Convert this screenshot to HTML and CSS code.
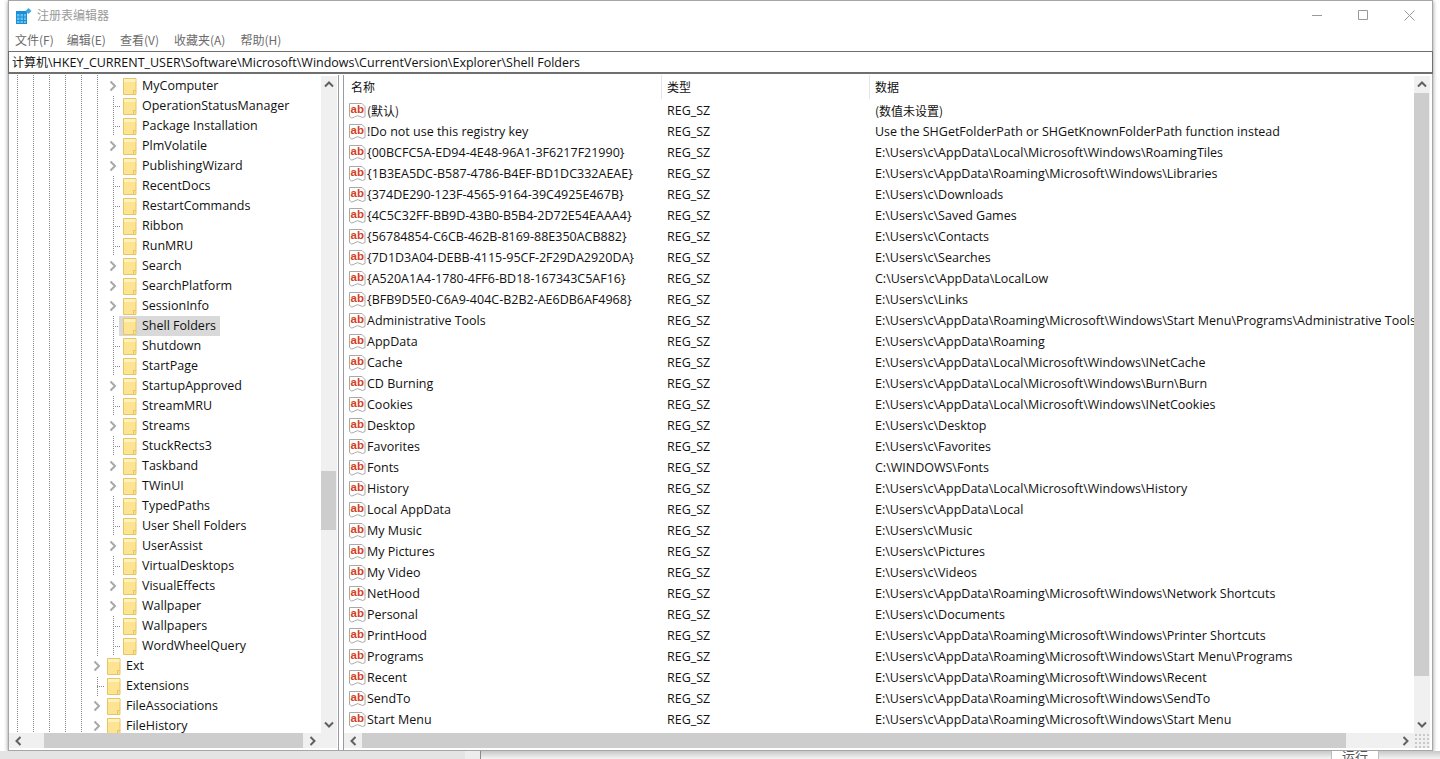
FILE: index.html
```html
<!DOCTYPE html>
<html lang="zh-CN">
<head>
<meta charset="utf-8">
<title>注册表编辑器</title>
<link rel="stylesheet" href="styles.css">
</head>
<body>
<svg class="defs" width="0" height="0" aria-hidden="true">
  <symbol id="folder" viewBox="0 0 14 17">
    <path d="M.5.5H13V16.5H.5Z" fill="#fce492" stroke="#e8c564"/>
    <path d="M1 1H12.5V4H1Z" fill="#fff1bb"/>
    <path d="M10.5 16.5V12.5H13" fill="#f9dc80" stroke="#e8c564"/>
  </symbol>
  <symbol id="ab" viewBox="0 0 17 16">
    <path d="M.5.5H13L16 3.500V13.500Q13.500 15.500 11 13.500T5.500 14T.5 13.500Z" fill="#fff" stroke="#a9a9a9"/>
    <text x="1.500" y="10" class="ab-text">ab</text>
  </symbol>
  <symbol id="chev" viewBox="0 0 8 12">
    <path d="M1.5 1.5 6 6 1.5 10.5" fill="none" stroke="#a8a8a8" stroke-width="2"/>
  </symbol>
  <symbol id="up" viewBox="0 0 10 7"><path d="M1 5.5 5 1.5 9 5.5" fill="none" stroke="#606060" stroke-width="2"/></symbol>
  <symbol id="down" viewBox="0 0 10 7"><path d="M1 1.5 5 5.5 9 1.5" fill="none" stroke="#606060" stroke-width="2"/></symbol>
  <symbol id="left" viewBox="0 0 7 10"><path d="M5.5 1 1.5 5 5.5 9" fill="none" stroke="#606060" stroke-width="2"/></symbol>
  <symbol id="right" viewBox="0 0 7 10"><path d="M1.5 1 5.5 5 1.5 9" fill="none" stroke="#606060" stroke-width="2"/></symbol>
</svg>
<div class="window">
  <header class="titlebar">
    <svg class="appicon" width="16" height="16" viewBox="0 0 16 16">
      <path d="M0 3H11V16H0Z" fill="#1a8fd6"/>
      <path d="M1 6H3.5V8.5H1ZM4.5 6H7V8.5H4.5ZM8 6H10V8.5H8ZM1 9.5H3.5V12H1ZM4.5 9.5H7V12H4.5ZM8 9.5H10V12H8ZM1 13H3.5V15H1ZM4.5 13H7V15H4.500ZM8 13H10V15H8Z" fill="#63c1f2"/>
      <path d="M12.500 0 15.500 3 12.500 6 9.500 3Z" fill="#3fa9e8"/>
    </svg>
    <span class="title">注册表编辑器</span>
    <div class="controls">
      <span class="ctl"><svg width="10" height="10" viewBox="0 0 10 10"><path d="M0 5.5H10" stroke="#999"/></svg></span>
      <span class="ctl"><svg width="10" height="10" viewBox="0 0 10 10"><path d="M.5.5H9.5V9.5H.5Z" fill="none" stroke="#999"/></svg></span>
      <span class="ctl"><svg width="11" height="11" viewBox="0 0 11 11"><path d="M.5.5 10.5 10.5M10.5.5.5 10.5" stroke="#999"/></svg></span>
    </div>
  </header>
  <nav class="menubar">
    <span>文件(F)</span><span>编辑(E)</span><span>查看(V)</span><span>收藏夹(A)</span><span>帮助(H)</span>
  </nav>
  <div class="address"><span class="c">计算机</span>\HKEY_CURRENT_USER\Software\Microsoft\Windows\CurrentVersion\Explorer\Shell Folders</div>
  <main class="panes">
    <section class="treepane">
      <div class="panebody">
        <div class="tree">
          <div class="row d2"><span class="exp"><svg width="8" height="12"><use href="#chev"/></svg></span><span class="node"><svg width="14" height="17"><use href="#folder"/></svg>MyComputer</span></div>
          <div class="row d2 leaf"><span class="exp"></span><span class="node"><svg width="14" height="17"><use href="#folder"/></svg>OperationStatusManager</span></div>
          <div class="row d2 leaf"><span class="exp"></span><span class="node"><svg width="14" height="17"><use href="#folder"/></svg>Package Installation</span></div>
          <div class="row d2"><span class="exp"><svg width="8" height="12"><use href="#chev"/></svg></span><span class="node"><svg width="14" height="17"><use href="#folder"/></svg>PlmVolatile</span></div>
          <div class="row d2"><span class="exp"><svg width="8" height="12"><use href="#chev"/></svg></span><span class="node"><svg width="14" height="17"><use href="#folder"/></svg>PublishingWizard</span></div>
          <div class="row d2 leaf"><span class="exp"></span><span class="node"><svg width="14" height="17"><use href="#folder"/></svg>RecentDocs</span></div>
          <div class="row d2 leaf"><span class="exp"></span><span class="node"><svg width="14" height="17"><use href="#folder"/></svg>RestartCommands</span></div>
          <div class="row d2 leaf"><span class="exp"></span><span class="node"><svg width="14" height="17"><use href="#folder"/></svg>Ribbon</span></div>
          <div class="row d2 leaf"><span class="exp"></span><span class="node"><svg width="14" height="17"><use href="#folder"/></svg>RunMRU</span></div>
          <div class="row d2"><span class="exp"><svg width="8" height="12"><use href="#chev"/></svg></span><span class="node"><svg width="14" height="17"><use href="#folder"/></svg>Search</span></div>
          <div class="row d2"><span class="exp"><svg width="8" height="12"><use href="#chev"/></svg></span><span class="node"><svg width="14" height="17"><use href="#folder"/></svg>SearchPlatform</span></div>
          <div class="row d2"><span class="exp"><svg width="8" height="12"><use href="#chev"/></svg></span><span class="node"><svg width="14" height="17"><use href="#folder"/></svg>SessionInfo</span></div>
          <div class="row d2 leaf"><span class="exp"></span><span class="node selected"><svg width="14" height="17"><use href="#folder"/></svg>Shell Folders</span></div>
          <div class="row d2 leaf"><span class="exp"></span><span class="node"><svg width="14" height="17"><use href="#folder"/></svg>Shutdown</span></div>
          <div class="row d2 leaf"><span class="exp"></span><span class="node"><svg width="14" height="17"><use href="#folder"/></svg>StartPage</span></div>
          <div class="row d2"><span class="exp"><svg width="8" height="12"><use href="#chev"/></svg></span><span class="node"><svg width="14" height="17"><use href="#folder"/></svg>StartupApproved</span></div>
          <div class="row d2 leaf"><span class="exp"></span><span class="node"><svg width="14" height="17"><use href="#folder"/></svg>StreamMRU</span></div>
          <div class="row d2"><span class="exp"><svg width="8" height="12"><use href="#chev"/></svg></span><span class="node"><svg width="14" height="17"><use href="#folder"/></svg>Streams</span></div>
          <div class="row d2 leaf"><span class="exp"></span><span class="node"><svg width="14" height="17"><use href="#folder"/></svg>StuckRects3</span></div>
          <div class="row d2"><span class="exp"><svg width="8" height="12"><use href="#chev"/></svg></span><span class="node"><svg width="14" height="17"><use href="#folder"/></svg>Taskband</span></div>
          <div class="row d2"><span class="exp"><svg width="8" height="12"><use href="#chev"/></svg></span><span class="node"><svg width="14" height="17"><use href="#folder"/></svg>TWinUI</span></div>
          <div class="row d2 leaf"><span class="exp"></span><span class="node"><svg width="14" height="17"><use href="#folder"/></svg>TypedPaths</span></div>
          <div class="row d2 leaf"><span class="exp"></span><span class="node"><svg width="14" height="17"><use href="#folder"/></svg>User Shell Folders</span></div>
          <div class="row d2"><span class="exp"><svg width="8" height="12"><use href="#chev"/></svg></span><span class="node"><svg width="14" height="17"><use href="#folder"/></svg>UserAssist</span></div>
          <div class="row d2 leaf"><span class="exp"></span><span class="node"><svg width="14" height="17"><use href="#folder"/></svg>VirtualDesktops</span></div>
          <div class="row d2"><span class="exp"><svg width="8" height="12"><use href="#chev"/></svg></span><span class="node"><svg width="14" height="17"><use href="#folder"/></svg>VisualEffects</span></div>
          <div class="row d2"><span class="exp"><svg width="8" height="12"><use href="#chev"/></svg></span><span class="node"><svg width="14" height="17"><use href="#folder"/></svg>Wallpaper</span></div>
          <div class="row d2 leaf"><span class="exp"></span><span class="node"><svg width="14" height="17"><use href="#folder"/></svg>Wallpapers</span></div>
          <div class="row d2 leaf"><span class="exp"></span><span class="node"><svg width="14" height="17"><use href="#folder"/></svg>WordWheelQuery</span></div>
          <div class="row d1"><span class="exp"><svg width="8" height="12"><use href="#chev"/></svg></span><span class="node"><svg width="14" height="17"><use href="#folder"/></svg>Ext</span></div>
          <div class="row d1 leaf"><span class="exp"></span><span class="node"><svg width="14" height="17"><use href="#folder"/></svg>Extensions</span></div>
          <div class="row d1"><span class="exp"><svg width="8" height="12"><use href="#chev"/></svg></span><span class="node"><svg width="14" height="17"><use href="#folder"/></svg>FileAssociations</span></div>
          <div class="row d1"><span class="exp"><svg width="8" height="12"><use href="#chev"/></svg></span><span class="node"><svg width="14" height="17"><use href="#folder"/></svg>FileHistory</span></div>
        </div>
        <div class="vbar tree-vbar">
          <span class="sbtn"><svg width="10" height="7"><use href="#up"/></svg></span>
          <div class="vtrack"><div class="vthumb tree-vthumb"></div></div>
          <span class="sbtn"><svg width="10" height="7"><use href="#down"/></svg></span>
        </div>
      </div>
      <div class="hbar tree-hbar">
        <span class="hbtn"><svg width="7" height="10"><use href="#left"/></svg></span>
        <div class="htrack"><div class="hthumb tree-hthumb"></div></div>
        <span class="hbtn"><svg width="7" height="10"><use href="#right"/></svg></span>
        <span class="corner"></span>
      </div>
    </section>
    <section class="listpane">
      <div class="panebody">
        <div class="list">
          <div class="lhead"><span class="c">名称</span><span class="c">类型</span><span class="c">数据</span></div>
          <div class="lrow"><span class="name"><svg width="17" height="16"><use href="#ab"/></svg><span class="c">(默认)</span></span><span>REG_SZ</span><span class="c">(数值未设置)</span></div>
          <div class="lrow"><span class="name"><svg width="17" height="16"><use href="#ab"/></svg>!Do not use this registry key</span><span>REG_SZ</span><span>Use the SHGetFolderPath or SHGetKnownFolderPath function instead</span></div>
          <div class="lrow"><span class="name"><svg width="17" height="16"><use href="#ab"/></svg>{00BCFC5A-ED94-4E48-96A1-3F6217F21990}</span><span>REG_SZ</span><span>E:\Users\c\AppData\Local\Microsoft\Windows\RoamingTiles</span></div>
          <div class="lrow"><span class="name"><svg width="17" height="16"><use href="#ab"/></svg>{1B3EA5DC-B587-4786-B4EF-BD1DC332AEAE}</span><span>REG_SZ</span><span>E:\Users\c\AppData\Roaming\Microsoft\Windows\Libraries</span></div>
          <div class="lrow"><span class="name"><svg width="17" height="16"><use href="#ab"/></svg>{374DE290-123F-4565-9164-39C4925E467B}</span><span>REG_SZ</span><span>E:\Users\c\Downloads</span></div>
          <div class="lrow"><span class="name"><svg width="17" height="16"><use href="#ab"/></svg>{4C5C32FF-BB9D-43B0-B5B4-2D72E54EAAA4}</span><span>REG_SZ</span><span>E:\Users\c\Saved Games</span></div>
          <div class="lrow"><span class="name"><svg width="17" height="16"><use href="#ab"/></svg>{56784854-C6CB-462B-8169-88E350ACB882}</span><span>REG_SZ</span><span>E:\Users\c\Contacts</span></div>
          <div class="lrow"><span class="name"><svg width="17" height="16"><use href="#ab"/></svg>{7D1D3A04-DEBB-4115-95CF-2F29DA2920DA}</span><span>REG_SZ</span><span>E:\Users\c\Searches</span></div>
          <div class="lrow"><span class="name"><svg width="17" height="16"><use href="#ab"/></svg>{A520A1A4-1780-4FF6-BD18-167343C5AF16}</span><span>REG_SZ</span><span>C:\Users\c\AppData\LocalLow</span></div>
          <div class="lrow"><span class="name"><svg width="17" height="16"><use href="#ab"/></svg>{BFB9D5E0-C6A9-404C-B2B2-AE6DB6AF4968}</span><span>REG_SZ</span><span>E:\Users\c\Links</span></div>
          <div class="lrow"><span class="name"><svg width="17" height="16"><use href="#ab"/></svg>Administrative Tools</span><span>REG_SZ</span><span>E:\Users\c\AppData\Roaming\Microsoft\Windows\Start Menu\Programs\Administrative Tools</span></div>
          <div class="lrow"><span class="name"><svg width="17" height="16"><use href="#ab"/></svg>AppData</span><span>REG_SZ</span><span>E:\Users\c\AppData\Roaming</span></div>
          <div class="lrow"><span class="name"><svg width="17" height="16"><use href="#ab"/></svg>Cache</span><span>REG_SZ</span><span>E:\Users\c\AppData\Local\Microsoft\Windows\INetCache</span></div>
          <div class="lrow"><span class="name"><svg width="17" height="16"><use href="#ab"/></svg>CD Burning</span><span>REG_SZ</span><span>E:\Users\c\AppData\Local\Microsoft\Windows\Burn\Burn</span></div>
          <div class="lrow"><span class="name"><svg width="17" height="16"><use href="#ab"/></svg>Cookies</span><span>REG_SZ</span><span>E:\Users\c\AppData\Local\Microsoft\Windows\INetCookies</span></div>
          <div class="lrow"><span class="name"><svg width="17" height="16"><use href="#ab"/></svg>Desktop</span><span>REG_SZ</span><span>E:\Users\c\Desktop</span></div>
          <div class="lrow"><span class="name"><svg width="17" height="16"><use href="#ab"/></svg>Favorites</span><span>REG_SZ</span><span>E:\Users\c\Favorites</span></div>
          <div class="lrow"><span class="name"><svg width="17" height="16"><use href="#ab"/></svg>Fonts</span><span>REG_SZ</span><span>C:\WINDOWS\Fonts</span></div>
          <div class="lrow"><span class="name"><svg width="17" height="16"><use href="#ab"/></svg>History</span><span>REG_SZ</span><span>E:\Users\c\AppData\Local\Microsoft\Windows\History</span></div>
          <div class="lrow"><span class="name"><svg width="17" height="16"><use href="#ab"/></svg>Local AppData</span><span>REG_SZ</span><span>E:\Users\c\AppData\Local</span></div>
          <div class="lrow"><span class="name"><svg width="17" height="16"><use href="#ab"/></svg>My Music</span><span>REG_SZ</span><span>E:\Users\c\Music</span></div>
          <div class="lrow"><span class="name"><svg width="17" height="16"><use href="#ab"/></svg>My Pictures</span><span>REG_SZ</span><span>E:\Users\c\Pictures</span></div>
          <div class="lrow"><span class="name"><svg width="17" height="16"><use href="#ab"/></svg>My Video</span><span>REG_SZ</span><span>E:\Users\c\Videos</span></div>
          <div class="lrow"><span class="name"><svg width="17" height="16"><use href="#ab"/></svg>NetHood</span><span>REG_SZ</span><span>E:\Users\c\AppData\Roaming\Microsoft\Windows\Network Shortcuts</span></div>
          <div class="lrow"><span class="name"><svg width="17" height="16"><use href="#ab"/></svg>Personal</span><span>REG_SZ</span><span>E:\Users\c\Documents</span></div>
          <div class="lrow"><span class="name"><svg width="17" height="16"><use href="#ab"/></svg>PrintHood</span><span>REG_SZ</span><span>E:\Users\c\AppData\Roaming\Microsoft\Windows\Printer Shortcuts</span></div>
          <div class="lrow"><span class="name"><svg width="17" height="16"><use href="#ab"/></svg>Programs</span><span>REG_SZ</span><span>E:\Users\c\AppData\Roaming\Microsoft\Windows\Start Menu\Programs</span></div>
          <div class="lrow"><span class="name"><svg width="17" height="16"><use href="#ab"/></svg>Recent</span><span>REG_SZ</span><span>E:\Users\c\AppData\Roaming\Microsoft\Windows\Recent</span></div>
          <div class="lrow"><span class="name"><svg width="17" height="16"><use href="#ab"/></svg>SendTo</span><span>REG_SZ</span><span>E:\Users\c\AppData\Roaming\Microsoft\Windows\SendTo</span></div>
          <div class="lrow"><span class="name"><svg width="17" height="16"><use href="#ab"/></svg>Start Menu</span><span>REG_SZ</span><span>E:\Users\c\AppData\Roaming\Microsoft\Windows\Start Menu</span></div>
        </div>
        <div class="vbar list-vbar">
          <span class="sbtn"><svg width="10" height="7"><use href="#up"/></svg></span>
          <div class="vtrack"><div class="vthumb list-vthumb"></div></div>
          <span class="sbtn"><svg width="10" height="7"><use href="#down"/></svg></span>
        </div>
      </div>
      <div class="hbar list-hbar">
        <span class="hbtn"><svg width="7" height="10"><use href="#left"/></svg></span>
        <div class="htrack"><div class="hthumb list-hthumb"></div></div>
        <span class="hbtn"><svg width="7" height="10"><use href="#right"/></svg></span>
        <span class="corner grip"></span>
      </div>
    </section>
  </main>
</div>
<div class="desk"><span class="desk-left"></span><span class="desk-run">运行</span></div>
</body>
</html>
```
FILE: styles.css
```css
* { box-sizing: border-box; }
html, body { margin: 0; height: 100%; overflow: hidden; }
body {
  background: #fff;
  font: 12.5px/20px "Open Sans", "Noto Sans CJK SC", sans-serif;
  color: #111;
  padding: 0 7px 0 8px;
}
.defs { position: absolute; }
.c { font: 12px/20px "Noto Sans CJK SC", sans-serif; }
.ab-text { font: bold 11.5px "Liberation Sans", sans-serif; fill: #d6401f; }

.window {
  height: 751px;
  background: #fff;
  border: 1px solid #a6a6a6;
  box-shadow: 0 1px 4px rgba(0, 0, 0, .45);
  display: flex;
  flex-direction: column;
  position: relative;
}

.titlebar { height: 29px; flex: none; display: flex; align-items: center; padding-left: 7px; }
.appicon { flex: none; }
.title { margin: 0 0 2px 5px; font: 12px/20px "Noto Sans CJK SC", sans-serif; color: #9a9a9a; }
.controls { margin-left: auto; display: flex; padding-bottom: 1px; }
.ctl { width: 46px; height: 28px; display: flex; align-items: center; justify-content: center; }

.menubar { height: 21px; flex: none; display: flex; gap: 14px; padding-left: 6px; background: #fff;
  font: 12px/19px "Noto Sans CJK SC", sans-serif; color: #6b6b6b; }
.menubar span:nth-child(1) { margin-right: -1px; }
.menubar span:nth-child(3), .menubar span:nth-child(4) { margin-right: 1px; }

.address {
  height: 23px; flex: none; border: 1px solid #6f6f6f; border-bottom-width: 2px;
  margin: 0 -1px; padding-left: 3px; line-height: 20px; white-space: nowrap; background: #fff;
}

.panes { flex: 1; min-height: 0; display: flex; margin-top: 1px; }
.treepane { width: 330px; flex: none; display: flex; flex-direction: column; border-right: 1px solid #9a9aa2; }
.listpane { flex: 1; min-width: 0; display: flex; flex-direction: column; margin-left: 4px; border-left: 1px solid #9a9aa2; }
.panebody { flex: 1; min-height: 0; display: flex; }

.tree {
  flex: 1; min-width: 0; overflow: hidden; padding-top: 1px;
  background-image:
    repeating-linear-gradient(#8a8a8a 0 1px, transparent 1px 2px),
    repeating-linear-gradient(#8a8a8a 0 1px, transparent 1px 2px),
    repeating-linear-gradient(#8a8a8a 0 1px, transparent 1px 2px),
    repeating-linear-gradient(#8a8a8a 0 1px, transparent 1px 2px),
    repeating-linear-gradient(#8a8a8a 0 1px, transparent 1px 2px),
    repeating-linear-gradient(#8a8a8a 0 1px, transparent 1px 2px);
  background-size: 1px 100%;
  background-repeat: no-repeat;
  background-position: 8px 0, 24px 0, 40px 0, 56px 0, 72px 0, 88px 0;
}
.row { height: 20px; display: flex; align-items: center; white-space: nowrap; }
.row.d2 { padding-left: 97px; background: repeating-linear-gradient(#8a8a8a 0 1px, transparent 1px 2px) 104px 0 / 1px 100% no-repeat; }
.row.d1 { padding-left: 81px; }
.exp { width: 14px; height: 20px; flex: none; display: flex; align-items: center; justify-content: center; background: #fff; }
.leaf .exp { background: repeating-linear-gradient(90deg, #8a8a8a 0 1px, transparent 1px 2px) 7px 10px / 7px 1px no-repeat; }
.node { display: inline-flex; align-items: flex-start; height: 20px; line-height: 19px; padding: 0 4px; margin-left: -1px; position: relative; }
.node svg { margin-right: 5px; flex: none; margin-top: 2px; }
.selected { background: #d9d9d9; }

.vbar { width: 16px; flex: none; display: flex; flex-direction: column; background: #f0f0f0; margin-top: 1px; }
.tree-vbar { margin-right: 1px; }
.list-vbar { margin-right: 2px; }
.sbtn { height: 17px; flex: none; display: flex; align-items: center; justify-content: center; }
.vtrack { flex: 1; min-height: 0; }
.vthumb { background: #cdcdcd; margin-right: 1px; }
.tree-vthumb { height: 59px; margin-top: 378px; }
.list-vthumb { height: 583px; }
.hbar { height: 15px; flex: none; display: flex; background: #f0f0f0; margin-bottom: 2px; }
.tree-hbar { margin-right: 1px; }
.list-hbar { margin-right: 2px; }
.hbtn { width: 18px; flex: none; display: flex; align-items: center; justify-content: center; }
.htrack { flex: 1; min-width: 0; display: flex; align-items: stretch; }
.hthumb { background: #cdcdcd; }
.tree-hthumb { width: 259px; margin-left: 17px; }
.list-hthumb { width: 984px; }
.corner { width: 16px; flex: none; }
.grip {
  background: radial-gradient(circle, #b8b8b8 1px, transparent 1px) 0 0 / 4px 4px;
  opacity: .7;
}

.list { flex: 1; min-width: 0; overflow: hidden; }
.lhead {
  height: 25px; display: grid; grid-template-columns: 317px 208px 1fr;
  font: 12px/24px "Noto Sans CJK SC", sans-serif;
}
.lhead span { line-height: 24px; padding-left: 5px; border-left: 1px solid #e5e5e5; height: 24px; }
.lhead span:first-child { border-left: 0; padding-left: 7px; }
.lrow { height: 21px; display: grid; grid-template-columns: 317px 208px 1fr; line-height: 21px; white-space: nowrap; }
.lrow > span { padding-left: 6px; overflow: hidden; }
.lrow > .name { padding-left: 5px; }
.lrow .c { line-height: 21px; }
.name { display: flex; align-items: center; }
.name svg { flex: none; margin-right: 1px; }

.desk { position: relative; height: 8px; overflow: hidden; margin: 0 -7px 0 -8px;
  display: flex; background: linear-gradient(#c8c8c8, #f4f4f4); }
.desk-left { width: 480px; flex: none; background: #e4e4e4; border-right: 15px solid #ededed; box-shadow: 1px 0 0 #8a8a8a; }
.desk-run { margin-left: 851px; width: 48px; flex: none; text-align: center; background: #fff;
  border: solid #bdbdbd; border-width: 0 1px; font: 13px/10px "Noto Sans CJK SC", sans-serif; color: #555; }
```
